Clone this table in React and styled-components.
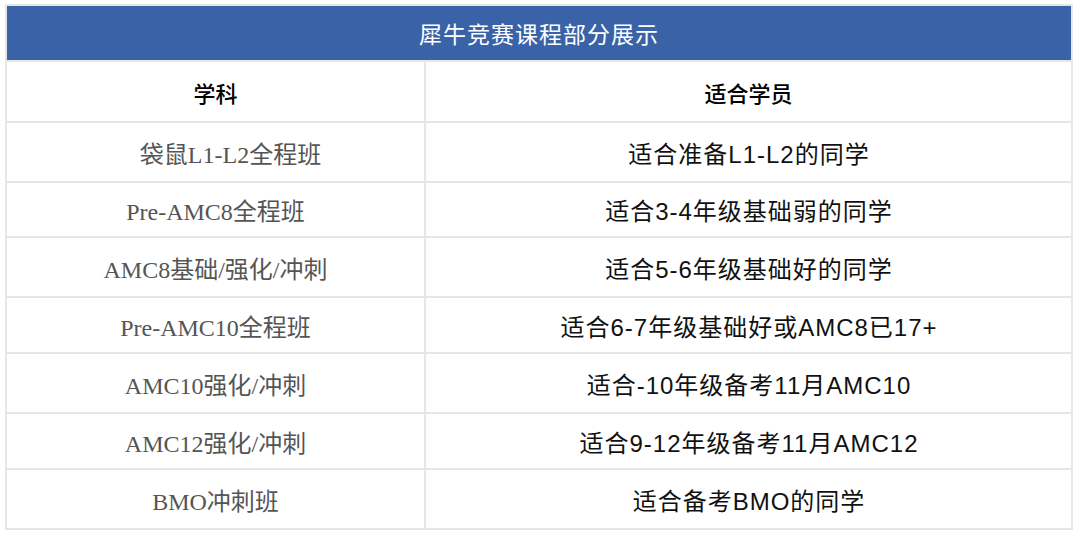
import React from "react";
import styled, { createGlobalStyle } from "styled-components";

const rows = [
  { name: "袋鼠L1-L2全程班", fit: "适合准备L1-L2的同学", h: 60, shift: 30 },
  { name: "Pre-AMC8全程班", fit: "适合3-4年级基础弱的同学", h: 55 },
  { name: "AMC8基础/强化/冲刺", fit: "适合5-6年级基础好的同学", h: 60 },
  { name: "Pre-AMC10全程班", fit: "适合6-7年级基础好或AMC8已17+", h: 56 },
  { name: "AMC10强化/冲刺", fit: "适合-10年级备考11月AMC10", h: 60 },
  { name: "AMC12强化/冲刺", fit: "适合9-12年级备考11月AMC12", h: 56 },
  { name: "BMO冲刺班", fit: "适合备考BMO的同学", h: 60 },
];

function App() {
  return (
    <>
      <GlobalStyle />
      <Table>
        <TitleBar>犀牛竞赛课程部分展示</TitleBar>
        <Row $h={61}>
          <HeadCell>学科</HeadCell>
          <HeadCell>适合学员</HeadCell>
        </Row>
        {rows.map((r) => (
          <Row key={r.name} $h={r.h}>
            <NameCell $shift={r.shift}>{r.name}</NameCell>
            <FitCell>{r.fit}</FitCell>
          </Row>
        ))}
      </Table>
    </>
  );
}

export default App;

const GlobalStyle = createGlobalStyle`
  html, body {
    margin: 0;
    padding: 0;
    background: #fff;
  }
  * {
    box-sizing: border-box;
  }
`;

const Table = styled.div`
  margin: 4px 0 0 5px;
  width: 1068px;
  border: 2px solid #e6e6e6;
  display: flex;
  flex-direction: column;
`;

const TitleBar = styled.div`
  height: 54px;
  background: #3a63a7;
  color: #fff;
  font-family: "Noto Sans CJK SC", sans-serif;
  font-size: 23px;
  letter-spacing: 1px;
  display: flex;
  align-items: center;
  justify-content: center;
`;

const Row = styled.div`
  height: ${(p) => p.$h}px;
  border-top: 2px solid #e6e6e6;
  display: grid;
  grid-template-columns: 419px 1fr;

  & > *:first-child {
    border-right: 2px solid #e6e6e6;
  }
`;

const Cell = styled.div`
  display: flex;
  align-items: center;
  justify-content: center;
  white-space: nowrap;
`;

const HeadCell = styled(Cell)`
  font-family: "Noto Sans CJK SC", sans-serif;
  font-size: 22px;
  font-weight: 500;
  color: #000;
`;

const NameCell = styled(Cell)`
  padding-left: ${(p) => p.$shift || 0}px;
  font-family: "Liberation Serif", "Noto Sans CJK SC", serif;
  font-size: 24px;
  color: #555;
`;

const FitCell = styled(Cell)`
  padding-left: 1px;
  font-family: "Liberation Sans", "Noto Sans CJK SC", sans-serif;
  font-size: 24px;
  letter-spacing: 1px;
  color: #111;
`;
